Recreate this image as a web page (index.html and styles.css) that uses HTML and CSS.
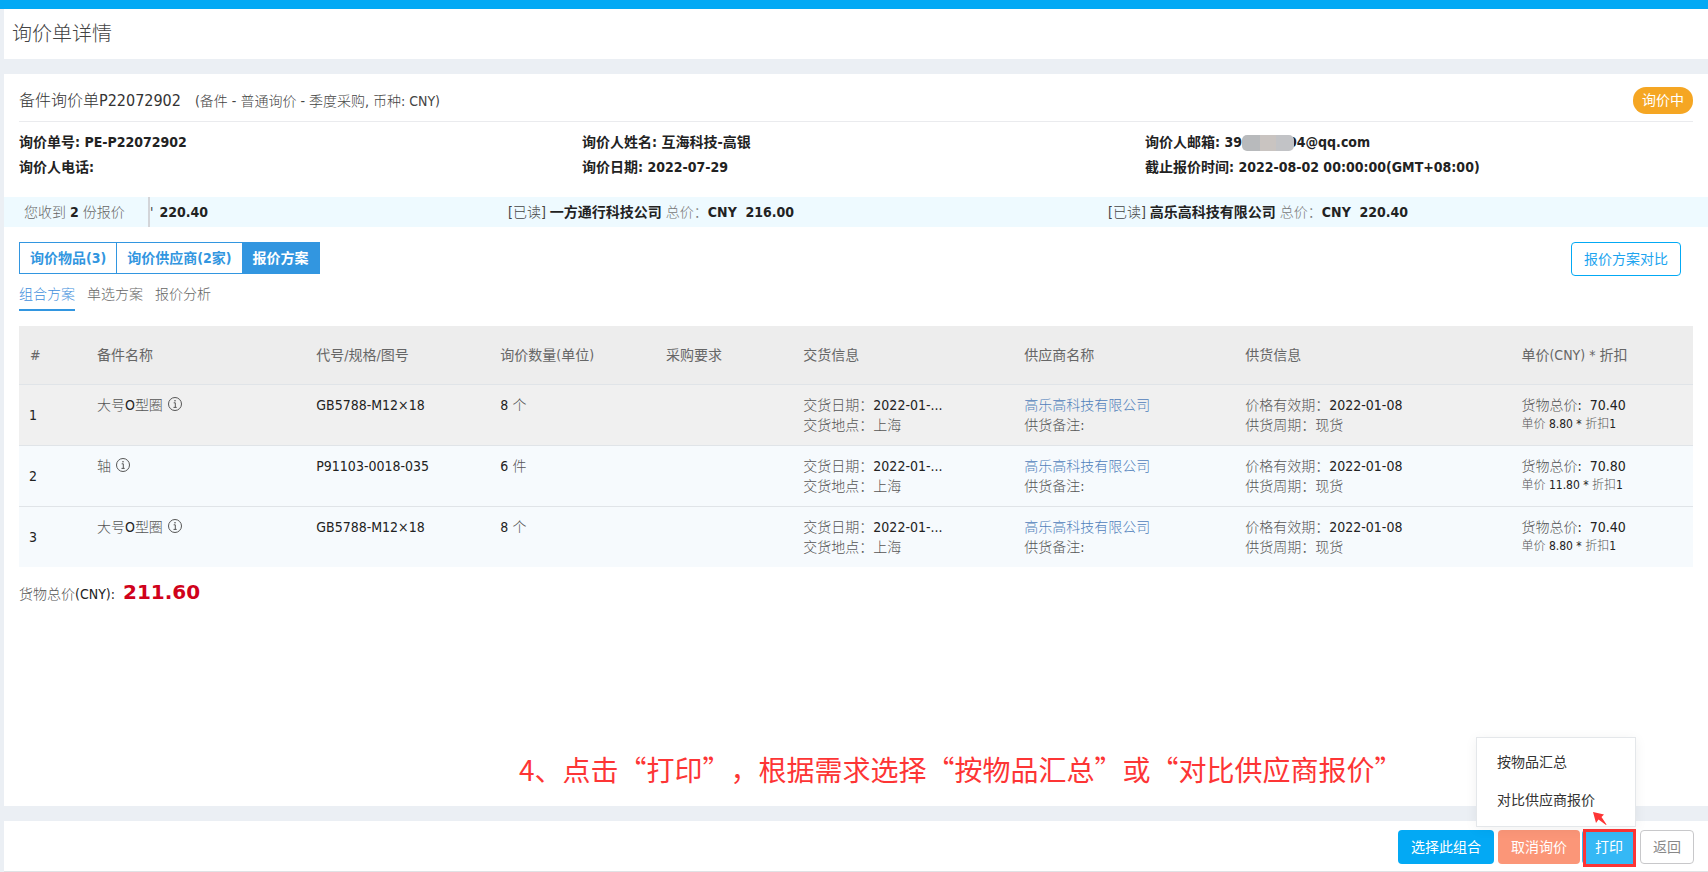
FILE: index.html
```html
<!DOCTYPE html>
<html lang="zh-CN">
<head>
<meta charset="utf-8">
<title>询价单详情</title>
<link rel="stylesheet" href="styles.css">
</head>
<body>
<div class="topbar"></div>
<header class="page-title"><h1>询价单详情</h1></header>
<main class="panel">
  <div class="order-head">
    <h2 class="order-name">备件询价单P22072902</h2>
    <span class="order-kind">(备件 - 普通询价 - 季度采购, 币种: CNY)</span>
    <span class="badge">询价中</span>
  </div>
  <div class="meta">
    <div>询价单号: PE-P22072902</div>
    <div>询价人姓名: 互海科技-高银</div>
    <div>询价人邮箱: 39<span class="mask"></span>04@qq.com</div>
    <div>询价人电话:</div>
    <div>询价日期: 2022-07-29</div>
    <div>截止报价时间: 2022-08-02 00:00:00(GMT+08:00)</div>
  </div>
  <div class="quotes">
    <div class="quotes-count">您收到 <b>2</b> 份报价</div>
    <div class="quotes-track">
      <div class="quote quote-leaving">'<b>220.40</b></div>
      <div class="quote">[已读] <b>一方通行科技公司</b> <span class="muted">总价：</span><b>CNY&nbsp; 216.00</b></div>
      <div class="quote">[已读] <b>高乐高科技有限公司</b> <span class="muted">总价：</span><b>CNY&nbsp; 220.40</b></div>
    </div>
  </div>
  <div class="toolbar">
    <div class="tabs">
      <button class="tab">询价物品(3)</button>
      <button class="tab">询价供应商(2家)</button>
      <button class="tab tab-active">报价方案</button>
    </div>
    <button class="btn-outline">报价方案对比</button>
  </div>
  <nav class="subtabs">
    <a class="subtab subtab-active" href="#">组合方案</a>
    <a class="subtab" href="#">单选方案</a>
    <a class="subtab" href="#">报价分析</a>
  </nav>
  <table class="items">
    <colgroup>
      <col class="c-index"><col class="c-name"><col class="c-code"><col class="c-qty"><col class="c-req"><col class="c-delivery"><col class="c-supplier"><col class="c-supply"><col class="c-price">
    </colgroup>
    <thead>
      <tr><th>#</th><th>备件名称</th><th>代号/规格/图号</th><th>询价数量(单位)</th><th>采购要求</th><th>交货信息</th><th>供应商名称</th><th>供货信息</th><th>单价(CNY) * 折扣</th></tr>
    </thead>
    <tbody>
      <tr class="row-hover">
        <td class="index">1</td>
        <td><span class="cjk">大号</span>O<span class="cjk">型圈</span> <svg class="info" viewBox="0 0 14 14"><circle cx="7" cy="7" r="6.5"/><path d="M5.7 5.8H7.3V10.3M5.5 10.4H8.7"/><circle class="dot" cx="7" cy="3.7" r=".8"/></svg></td>
        <td>GB5788-M12×18</td>
        <td>8 <span class="cjk">个</span></td>
        <td></td>
        <td><span class="cjk">交货日期：</span>2022-01-...<br><span class="cjk">交货地点：上海</span></td>
        <td><a class="supplier" href="#">高乐高科技有限公司</a><br><span class="cjk">供货备注:</span></td>
        <td><span class="cjk">价格有效期：</span>2022-01-08<br><span class="cjk">供货周期：现货</span></td>
        <td><span class="cjk">货物总价</span>:&nbsp; 70.40<div class="unit"><span class="cjk">单价</span> 8.80 * <span class="cjk">折扣</span>1</div></td>
      </tr>
      <tr>
        <td class="index">2</td>
        <td><span class="cjk">轴</span> <svg class="info" viewBox="0 0 14 14"><circle cx="7" cy="7" r="6.5"/><path d="M5.7 5.8H7.3V10.3M5.5 10.4H8.7"/><circle class="dot" cx="7" cy="3.7" r=".8"/></svg></td>
        <td>P91103-0018-035</td>
        <td>6 <span class="cjk">件</span></td>
        <td></td>
        <td><span class="cjk">交货日期：</span>2022-01-...<br><span class="cjk">交货地点：上海</span></td>
        <td><a class="supplier" href="#">高乐高科技有限公司</a><br><span class="cjk">供货备注:</span></td>
        <td><span class="cjk">价格有效期：</span>2022-01-08<br><span class="cjk">供货周期：现货</span></td>
        <td><span class="cjk">货物总价</span>:&nbsp; 70.80<div class="unit"><span class="cjk">单价</span> 11.80 * <span class="cjk">折扣</span>1</div></td>
      </tr>
      <tr>
        <td class="index">3</td>
        <td><span class="cjk">大号</span>O<span class="cjk">型圈</span> <svg class="info" viewBox="0 0 14 14"><circle cx="7" cy="7" r="6.5"/><path d="M5.7 5.8H7.3V10.3M5.5 10.4H8.7"/><circle class="dot" cx="7" cy="3.7" r=".8"/></svg></td>
        <td>GB5788-M12×18</td>
        <td>8 <span class="cjk">个</span></td>
        <td></td>
        <td><span class="cjk">交货日期：</span>2022-01-...<br><span class="cjk">交货地点：上海</span></td>
        <td><a class="supplier" href="#">高乐高科技有限公司</a><br><span class="cjk">供货备注:</span></td>
        <td><span class="cjk">价格有效期：</span>2022-01-08<br><span class="cjk">供货周期：现货</span></td>
        <td><span class="cjk">货物总价</span>:&nbsp; 70.40<div class="unit"><span class="cjk">单价</span> 8.80 * <span class="cjk">折扣</span>1</div></td>
      </tr>
    </tbody>
  </table>
  <div class="total"><span><span class="cjk">货物总价</span>(CNY):</span><strong class="total-sum">211.60</strong></div>
  <p class="hint">4、点击“打印”，根据需求选择“按物品汇总”或“对比供应商报价”</p>
</main>
<footer class="actions">
  <button class="btn btn-primary">选择此组合</button>
  <button class="btn btn-cancel">取消询价</button>
  <div class="print">
    <button class="btn btn-print">打印</button>
    <div class="focus-box"></div>
    <div class="menu">
      <button class="menu-item">按物品汇总</button>
      <button class="menu-item">对比供应商报价</button>
      <svg class="arrow" viewBox="0 0 14 14"><path d="M0 0L11 2.5L8.5 5L13.5 12.5L13 13L5.5 7.5L3 11Z"/></svg>
    </div>
  </div>
  <button class="btn btn-back">返回</button>
</footer>
</body>
</html>
```

FILE: styles.css
```css
* { box-sizing: border-box; }

body {
  margin: 0;
  min-height: 100vh;
  display: flex;
  flex-direction: column;
  background: #ebeff4;
  color: #222;
  font-family: "DejaVu Sans Condensed", "Noto Sans CJK SC", sans-serif;
  font-size: 14px;
  font-weight: 300;
  line-height: 20px;
}

button { font: inherit; cursor: pointer; }
a { text-decoration: none; }
b { font-weight: 700; }

.cjk { color: #555; }
.muted { color: #777; }

.topbar { height: 9px; background: #03a9f4; }

.page-title {
  margin-left: 4px;
  padding: 10px 8px;
  background: #fff;
}
.page-title h1 {
  margin: 0;
  color: #444;
  font-size: 20px;
  font-weight: 300;
  line-height: 30px;
}

.panel {
  flex: 1;
  display: flex;
  flex-direction: column;
  margin: 15px 0 15px 4px;
  background: #fff;
}

.order-head {
  display: flex;
  align-items: center;
  gap: 14px;
  margin: 0 15px;
  padding: 13px 0 7px;
  border-bottom: 1px solid #eaebee;
}
.order-name {
  margin: 0;
  color: #333;
  font-size: 16px;
  font-weight: 300;
}
.order-kind { color: #444; }
.badge {
  margin-left: auto;
  padding: 0 9px;
  border-radius: 13px;
  background: #f5a623;
  color: #fff;
  font-weight: 400;
  line-height: 27px;
}

.meta {
  display: grid;
  grid-template-columns: repeat(3, 1fr);
  margin-left: 15px;
  padding: 8px 0 17px;
  font-weight: 700;
  line-height: 25px;
}
.mask {
  display: inline-block;
  width: 52px;
  height: 16px;
  margin-right: -6px;
  border-radius: 5px;
  background: linear-gradient(90deg, #b8babc 35%, #c9c4c1 35%, #c9c4c1 65%, #c2c3c6 65%);
  position: relative;
  vertical-align: middle;
}

.quotes {
  display: flex;
  background: #eefaff;
  line-height: 30px;
}
.quotes-count {
  width: 146px;
  padding-left: 20px;
  border-right: 2px solid #d3d5d9;
  color: #666;
}
.quotes-count b { color: #222; }
.quotes-track { flex: 1; display: flex; }
.quote { width: 600px; color: #444; }
.quote b { color: #222; }
.quote-leaving { width: 358px; }
.quote-leaving b { margin-left: 6px; }

.toolbar {
  display: flex;
  justify-content: space-between;
  align-items: flex-start;
  margin: 15px 27px 0 15px;
}
.tabs { display: flex; }
.tab {
  margin: 0 0 0 -1px;
  padding: 5px 10px;
  border: 1px solid #3296e0;
  background: #fff;
  color: #3296e0;
  font-weight: 700;
}
.tab:first-child { margin-left: 0; }
.tab-active { background: #3296e0; color: #fff; }
.btn-outline {
  padding: 6px 12px;
  border: 1px solid #03a9f4;
  border-radius: 4px;
  background: #fff;
  color: #1ca4ef;
  font-weight: 400;
}

.subtabs { display: flex; gap: 12px; margin: 0 15px; }
.subtab {
  padding: 8px 0 5px;
  border-bottom: 2px solid transparent;
  color: #666;
}
.subtab-active { border-color: #3296e0; color: #3f8fdc; }

.items {
  margin: 15px 15px 0;
  border-collapse: collapse;
  table-layout: fixed;
}
.c-index { width: 4%; }
.c-name { width: 13.1%; }
.c-code { width: 11%; }
.c-qty { width: 9.9%; }
.c-req { width: 8.2%; }
.c-delivery { width: 13.2%; }
.c-supplier { width: 13.2%; }
.c-supply { width: 16.5%; }
.c-price { width: 10.9%; }
.items th {
  padding: 19px 11px;
  border-bottom: 1px solid #e0e4e8;
  background: #ededed;
  color: #666;
  font-weight: 400;
  text-align: left;
}
.items td {
  padding: 10px 11px;
  background: #f6fafd;
  vertical-align: top;
}
.items tbody tr + tr td { border-top: 1px solid #e0e4e8; }
.items .row-hover td { background: #f0f0f0; }
.items .index { padding-left: 10px; vertical-align: middle; }
.supplier { color: #4f80bb; }
.unit { font-size: 12px; line-height: 18px; }

.info {
  width: 14px;
  height: 14px;
  margin-left: 1px;
  fill: none;
  stroke: #555;
  vertical-align: -1px;
}
.info .dot { fill: #555; stroke: none; }

.total {
  display: flex;
  align-items: baseline;
  gap: 8px;
  margin: 13px 15px 0;
}
.total-sum {
  color: #d0021b;
  font-family: "DejaVu Sans", sans-serif;
  font-size: 20px;
  font-weight: 700;
  line-height: 24px;
}

.hint {
  margin: auto 0 15px 515px;
  color: #fd3535;
  font-family: "Noto Sans CJK SC", sans-serif;
  font-size: 28px;
  font-weight: 400;
  line-height: 44px;
  text-spacing-trim: space-all;
}

.actions {
  display: flex;
  justify-content: flex-end;
  gap: 4px;
  margin-left: 4px;
  padding: 9px 14px 7px;
  border-bottom: 1px solid #e0e2e5;
  background: #fff;
}
.btn {
  height: 34px;
  padding: 0 12px;
  border: 1px solid transparent;
  border-radius: 4px;
  color: #fff;
  font-weight: 400;
}
.btn-primary { background: #03a9f4; }
.btn-cancel { background: #fb9678; }
.btn-print { background: #35b8f5; }
.btn-back { border-color: #c8c8ca; background: #fff; color: #888; }

.print { position: relative; margin-left: -2px; }
.focus-box {
  position: absolute;
  inset: -1px 0 -3px 1px;
  border: 3px solid #fd3535;
  pointer-events: none;
}
.menu {
  position: absolute;
  right: 0;
  bottom: 37px;
  width: 160px;
  padding: 5px 0 7px;
  border: 1px solid #e4e7ea;
  background: #fff;
  box-shadow: 0 2px 12px rgba(0, 0, 0, .06);
}
.menu-item {
  display: block;
  width: 100%;
  padding: 9px 20px;
  border: 0;
  background: none;
  color: #333;
  font-weight: 400;
  text-align: left;
}
.arrow {
  position: absolute;
  right: 28px;
  bottom: 0;
  width: 14px;
  height: 14px;
  fill: #fd3535;
}
```
